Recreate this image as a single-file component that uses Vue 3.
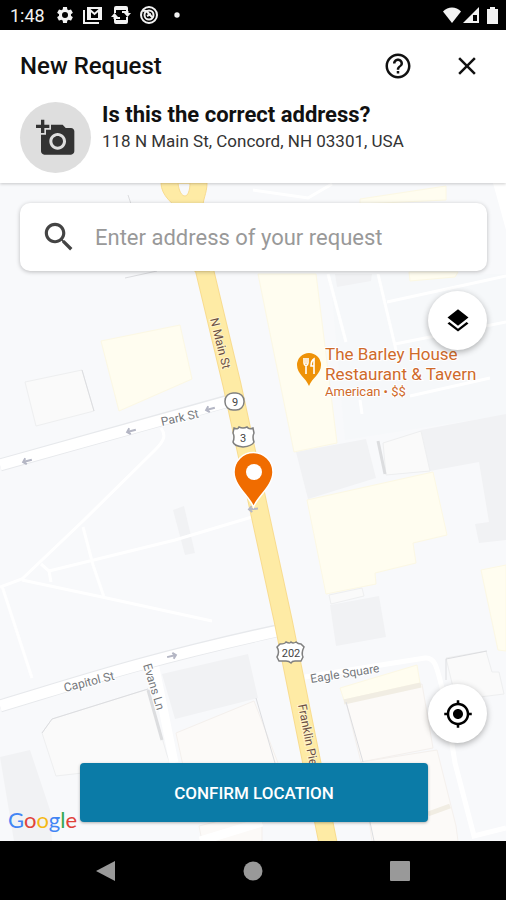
<script setup>
import { ref } from 'vue';

const address = ref('');

// Здания на карте
const yellowBlocks = [
  '101,341 180,325 192,379 119,411',
  '258,274 316,274 337,443 294,452',
  '360,199 446,186 446,200 360,204',
  '409,272 458,272 455,277 410,281',
  '307,500 433,472 447,535 413,543 416,563 375,573 376,584 326,594',
  '481,570 506,565 506,651 498,650',
  '340,688 417,665 420,683 344,700',
];

const grayBlocks = [
  '296,452 366,439 376,478 308,499',
  '421,430 506,414 506,540 479,543 475,524 489,522 479,462 430,471',
  '330,605 379,596 386,637 336,646',
  '335,274 372,274 371,281 337,287',
  '173,510 184,506 195,553 185,555',
  '162,674 248,654 258,698 175,719',
  '0,757 30,750 50,810 52,841 14,841',
];

const whiteBlocks = [
  '25,382 82,370 94,411 36,426',
  '383,443 421,431 430,471 386,475',
  '42,733 52,719 148,689 167,755 170,763 56,776',
  '446,658 486,651 492,672 499,672 504,694 456,700',
  '329,595 362,588 364,596 331,604',
];

const pinkBlocks = [
  '176,733 254,701 278,763 278,784 187,784',
  '346,702 422,684 433,748 361,762',
  '361,762 437,750 456,826 458,841 372,841',
  '199,826 262,810 262,841 202,841',
];

// Пешеходные дорожки и мелкие улицы
const paths = [
  'M161 428C166 435 165 440 155 450L84 520L22 579L0 587',
  'M49 571L175 540L252 517',
  'M22 580L102 597L212 621',
  'M83 527L93 565L104 597',
  'M41 564L49 571L51 582',
  'M2 586L32 678',
  'M328 274L346 342',
  'M378 274L396 350',
  'M387 302L506 276',
  'M395 344L506 322',
  'M360 400L362 414',
  'M410 396L490 378',
  'M253 190L308 198L332 184',
];

const arrows = [
  { x: 27, y: 461, turn: 165 },
  { x: 131, y: 431, turn: 165 },
  { x: 210, y: 409, turn: 165 },
  { x: 172, y: 656, turn: -13 },
  { x: 253, y: 509, turn: 175 },
];

const logo = [
  { letter: 'G', color: 'logo-blue' },
  { letter: 'o', color: 'logo-red' },
  { letter: 'o', color: 'logo-yellow' },
  { letter: 'g', color: 'logo-blue' },
  { letter: 'l', color: 'logo-green' },
  { letter: 'e', color: 'logo-red' },
];
</script>

<template>
  <div class="screen">
    <div class="status-bar">
      <span class="time">1:48</span>
      <svg class="status-icon" viewBox="0 0 24 24">
        <path d="M19.14 12.94c.04-.3.06-.61.06-.94 0-.32-.02-.64-.07-.94l2.03-1.58c.18-.14.23-.41.12-.61l-1.92-3.32c-.12-.22-.37-.29-.59-.22l-2.39.96c-.5-.38-1.03-.7-1.62-.94l-.36-2.54c-.04-.24-.24-.41-.48-.41h-3.84c-.24 0-.43.17-.47.41l-.36 2.54c-.59.24-1.13.57-1.62.94l-2.39-.96c-.22-.08-.47 0-.59.22L2.74 8.87c-.12.21-.08.47.12.61l2.03 1.58c-.05.3-.09.63-.09.94s.02.64.07.94l-2.03 1.58c-.18.14-.23.41-.12.61l1.92 3.32c.12.22.37.29.59.22l2.39-.96c.5.38 1.03.7 1.62.94l.36 2.54c.05.24.24.41.48.41h3.84c.24 0 .44-.17.47-.41l.36-2.54c.59-.24 1.13-.56 1.62-.94l2.39.96c.22.08.47 0 .59-.22l1.92-3.32c.12-.22.07-.47-.12-.61l-2.01-1.58zM12 15.6A3.6 3.6 0 1 1 12 8.4a3.6 3.6 0 0 1 0 7.2z" />
      </svg>
      <svg class="status-icon" viewBox="0 0 20 20">
        <path d="M1 5v13h15" class="line" />
        <path d="M5 3h13v11H5z" class="line" />
        <path d="M7 13V5l4.500 4L16 5v8" class="line" />
      </svg>
      <svg class="status-icon" viewBox="0 0 20 20">
        <path d="M5 1h10a2 2 0 0 1 2 2v5h-2V5H5v3H3V3a2 2 0 0 1 2-2zM3 12h2v3h10v-3h2v5a2 2 0 0 1-2 2H5a2 2 0 0 1-2-2z" />
        <path d="M0 12l3.500-4 3.500 4zM13 8h7l-3.500 4z" />
        <path d="M3.500 11v2H9M16.500 9V7H11" class="line" />
      </svg>
      <svg class="status-icon" viewBox="0 0 20 20">
        <circle cx="10" cy="10" r="8" class="line" />
        <circle cx="10" cy="10" r="4.500" class="line" />
        <path d="M4 6q4-1 6 3l4 4M8 11l4-2" class="line" />
      </svg>
      <svg class="status-icon" viewBox="0 0 20 20"><circle cx="10" cy="10" r="2.700" /></svg>
      <div class="signals">
        <svg width="18" height="16" viewBox="0 0 18 16"><path d="M9 16L0 4.500C5-1 13-1 18 4.500z" /></svg>
        <svg width="16" height="16" viewBox="0 0 16 16">
          <path fill-rule="evenodd" d="M16 0v16H0zM10 8v6h4V8z" />
        </svg>
        <svg class="battery" width="11" height="17" viewBox="0 0 11 17">
          <path d="M3 0h5v2h3v15H0V2h3z" />
        </svg>
      </div>
    </div>

    <header class="header">
      <div class="title-row">
        <h1>New Request</h1>
        <button class="icon-button" type="button" aria-label="Help">
          <svg width="30" height="30" viewBox="0 0 24 24">
            <path d="M11 18h2v-2h-2v2zm1-16C6.480 2 2 6.480 2 12s4.480 10 10 10 10-4.480 10-10S17.520 2 12 2zm0 18c-4.410 0-8-3.590-8-8s3.590-8 8-8 8 3.590 8 8-3.590 8-8 8zm0-14c-2.210 0-4 1.790-4 4h2c0-1.100.9-2 2-2s2 .9 2 2c0 2-3 1.750-3 5h2c0-2.250 3-2.500 3-5 0-2.210-1.790-4-4-4z" />
          </svg>
        </button>
        <button class="icon-button" type="button" aria-label="Close">
          <svg width="30" height="30" viewBox="0 0 24 24">
            <path d="M19 6.410L17.590 5 12 10.590 6.410 5 5 6.410 10.590 12 5 17.590 6.410 19 12 13.410 17.590 19 19 17.590 13.410 12z" />
          </svg>
        </button>
      </div>
      <div class="address-row">
        <button class="photo" type="button" aria-label="Add photo">
          <svg width="40" height="40" viewBox="0 0 24 24">
            <path d="M3 4V1h2v3h3v2H5v3H3V6H0V4h3zm3 6V7h3V4h7l1.830 2H21c1.100 0 2 .9 2 2v12c0 1.100-.9 2-2 2H5c-1.100 0-2-.9-2-2V10h3zm7 9c2.760 0 5-2.240 5-5s-2.240-5-5-5-5 2.240-5 5 2.240 5 5 5zm-3.200-5c0 1.770 1.430 3.200 3.200 3.200s3.200-1.430 3.200-3.200-1.430-3.200-3.200-3.200-3.200 1.430-3.200 3.200z" />
          </svg>
        </button>
        <div class="address">
          <h2>Is this the correct address?</h2>
          <p>118 N Main St, Concord, NH 03301, USA</p>
        </div>
      </div>
    </header>

    <main class="map">
      <svg class="map-canvas" viewBox="0 183 506 658" preserveAspectRatio="xMidYMid slice">
        <rect x="0" y="183" width="506" height="658" fill="#f8f9fb" />
        <path d="M330 274L506 274V415L440 425L345 440z" fill="#f6f8fa" />
        <polygon v-for="points in grayBlocks" :key="points" :points="points" class="gray" />
        <polygon v-for="points in yellowBlocks" :key="points" :points="points" class="yellow" />
        <polygon v-for="points in whiteBlocks" :key="points" :points="points" class="white" />
        <polygon v-for="points in pinkBlocks" :key="points" :points="points" class="pink" />
        <path d="M344 702L421 685M428 814L450 806" fill="none" stroke="#f1ede3" stroke-width="5" />

        <!-- Тени зданий -->
        <path d="M378 441l7 33" class="shade" />
        <path d="M148 690l14 50" class="shade" />
        <path d="M82 370l12 41M446 680v-21l41-8M42 733l10-14 96-30M346 702l17 60M256 698l19 65M370 822l4 19M125 278l32-7M128 195l4 12" class="thin-shade" />

        <path v-for="d in paths" :key="d" :d="d" class="footpath" />
        <path d="M305 677L425 658C436 657 437 668 445 700L455 763L474 836L506 828" class="footpath wide" />
        <path d="M154 663L174 763M200 841L262 822" class="lane" />
        <path d="M493 183L506 230V183z" fill="#fff" />

        <!-- Улицы -->
        <path d="M0 465L228 401" class="street-edge" />
        <path d="M0 465L230 401" class="street" />
        <path d="M0 706C80 682 145 660 276 631" class="street-edge" />
        <path d="M0 706C80 682 145 660 278 631" class="street" />

        <path d="M204 268L232 385L283 620L328 843" class="highway-edge" />
        <path d="M204 268L232 385L283 620L328 843" class="highway" />
        <path fill-rule="evenodd" d="M161 183H207C207 194 202 200 203 210L210 271H194L184 211C173 206 161 195 161 183zM178 183C179 192 182 196 185 196S190 190 190 183z" class="junction" />

        <g v-for="(arrow, i) in arrows" :key="i" :transform="`translate(${arrow.x} ${arrow.y}) rotate(${arrow.turn})`">
          <path d="M-5 0H3M1-3L4 0 1 3" class="arrow" />
        </g>

        <g class="street-name">
          <text transform="translate(162 426) rotate(-13)">Park St</text>
          <text transform="translate(65 692) rotate(-14)">Capitol St</text>
          <text transform="translate(143 665) rotate(73)">Evans Ln</text>
          <text transform="translate(311 683) rotate(-9)" class="square">Eagle Square</text>
          <text transform="translate(210 319) rotate(76)" class="main">N Main St</text>
          <text transform="translate(298 705) rotate(79)" class="main">Franklin Pierce</text>
        </g>

        <g class="shield">
          <rect x="225" y="393" width="19" height="17" rx="8" />
          <text x="235" y="406">9</text>
          <path d="M234 428q4 2 5-1 4 2 8 0 2 3 6 1l1 5q-2 4 0 9-2 4-11 5-9-1-10-5 2-5 0-9z" />
          <text x="243" y="442">3</text>
          <path d="M280 644q5 0 6-2 4 2 5 0 2 2 5 0 2 2 5 2l3 3q-3 6-1 10l-2 4-6 0q-3 0-4 2-2-2-5-2l-7 0-2-4q3-5 0-10z" />
          <text x="291" y="657">202</text>
        </g>

        <path d="M309 386C306 378 297 374 297 365a12 12 0 0 1 24 0C321 374 312 378 309 386z" fill="#ee9208" />
        <path d="M304 358v5q0 2 2 3v8M306 358v6M308 358v5q0 2-2 3M314 374v-15q-3 2-3 7h3" fill="none" stroke="#fff" stroke-width="1.600" />
        <g class="place">
          <text x="325" y="360">The Barley House</text>
          <text x="325" y="380">Restaurant &amp; Tavern</text>
          <text x="325" y="396" class="kind">American • $$</text>
        </g>

        <path d="M253.500 507C250 497 234 486 234 472a19.500 19.500 0 0 1 39 0C273 486 257 497 253.500 507z" fill="#f06c00" stroke="#fff" stroke-width="1.500" />
        <circle cx="254" cy="472" r="8" fill="#fff" />
      </svg>

      <div class="controls">
        <label class="search">
          <svg width="38" height="38" viewBox="0 0 24 24">
            <path d="M15.500 14h-.79l-.28-.27C15.410 12.590 16 11.110 16 9.500 16 5.910 13.090 3 9.500 3S3 5.910 3 9.500 5.910 16 9.500 16c1.610 0 3.090-.59 4.230-1.570l.27.28v.79l5 4.990L20.490 19l-4.990-5zm-6 0C7.010 14 5 11.990 5 9.500S7.010 5 9.500 5 14 7.010 14 9.500 11.990 14 9.500 14z" />
          </svg>
          <input v-model="address" type="text" placeholder="Enter address of your request" aria-label="Enter address of your request">
        </label>
        <button class="round" type="button" aria-label="Map layers">
          <svg width="28" height="28" viewBox="0 0 24 24">
            <path d="M11.990 18.540l-7.370-5.730L3 14.070l9 7 9-7-1.630-1.270-7.380 5.740zM12 16l7.360-5.730L21 9l-9-7-9 7 1.630 1.270L12 16z" />
          </svg>
        </button>
        <button class="round locate" type="button" aria-label="My location">
          <svg width="30" height="30" viewBox="0 0 24 24">
            <path d="M12 8c-2.210 0-4 1.790-4 4s1.790 4 4 4 4-1.790 4-4-1.790-4-4-4zm8.940 3c-.46-4.170-3.770-7.480-7.940-7.940V1h-2v2.060C6.830 3.520 3.520 6.830 3.060 11H1v2h2.060c.46 4.170 3.770 7.480 7.940 7.940V23h2v-2.060c4.170-.46 7.480-3.770 7.940-7.940H23v-2h-2.060zM12 19c-3.870 0-7-3.130-7-7s3.130-7 7-7 7 3.130 7 7-3.130 7-7 7z" />
          </svg>
        </button>
      </div>
      <div class="bottom-row">
        <div class="logo">
          <span v-for="(item, i) in logo" :key="i" :class="item.color">{{ item.letter }}</span>
        </div>
        <button class="confirm" type="button">CONFIRM LOCATION</button>
      </div>
    </main>

    <nav class="nav-bar">
      <button type="button" aria-label="Back">
        <svg width="20" height="20" viewBox="0 0 20 20"><path d="M19 0v20L0 10z" /></svg>
      </button>
      <button type="button" aria-label="Home">
        <svg width="20" height="20" viewBox="0 0 20 20"><circle cx="10" cy="10" r="9.500" /></svg>
      </button>
      <button type="button" aria-label="Recent apps">
        <svg width="20" height="20" viewBox="0 0 20 20"><rect width="20" height="20" rx="1" /></svg>
      </button>
    </nav>
  </div>
</template>

<style>
body {
  margin: 0;
  background: #000;
}
</style>

<style scoped>
.screen {
  min-height: 100vh;
  display: flex;
  flex-direction: column;
  font-family: Roboto, "Liberation Sans", sans-serif;
  color: #111;
}

button {
  border: none;
  padding: 0;
  background: none;
  font-family: inherit;
  cursor: pointer;
  display: flex;
  align-items: center;
  justify-content: center;
}

/* Строка состояния */
.status-bar {
  height: 30px;
  padding: 0 8px 0 10px;
  display: flex;
  align-items: center;
  gap: 8px;
  background: #000;
  color: #f2f2f2;
  fill: #f2f2f2;
}

.time {
  font-size: 18px;
  margin-right: 2px;
}

.status-icon {
  width: 20px;
  height: 20px;
}

.line {
  fill: none;
  stroke: #f2f2f2;
  stroke-width: 2;
}

.signals {
  margin-left: auto;
  display: flex;
  align-items: center;
  gap: 2px;
}

.battery {
  margin-left: 6px;
}

/* Шапка */
.header {
  padding: 17px 20px 10px;
  background: #fff;
  box-shadow: 0 1px 3px rgba(0, 0, 0, 0.2);
  position: relative;
  z-index: 1;
}

.title-row {
  height: 38px;
  display: flex;
  align-items: center;
  gap: 39px;
  padding-right: 4px;
}

.icon-button {
  fill: #111;
}

h1 {
  flex: 1;
  margin: 0;
  font-size: 24px;
  line-height: 32px;
  font-weight: 500;
}

.address-row {
  display: flex;
  gap: 11px;
  margin-top: 17px;
}

.photo {
  width: 71px;
  height: 71px;
  border-radius: 50%;
  background: #dedede;
  fill: #333;
}

h2 {
  margin: 0;
  font-size: 22px;
  line-height: 26px;
  font-weight: 700;
}

p {
  margin: 0;
  font-size: 17px;
  line-height: 26px;
  color: #333;
}

/* Карта */
.map {
  flex: 1;
  position: relative;
  display: flex;
  flex-direction: column;
  overflow: hidden;
}

.map-canvas {
  position: absolute;
  inset: 0;
  width: 100%;
  height: 100%;
}

.gray {
  fill: #f1f2f4;
}

.yellow {
  fill: #fffdf0;
  stroke: #fcf8e4;
}

.white {
  fill: #fafafa;
  stroke: #eeeff0;
}

.pink {
  fill: #fcfaf8;
  stroke: #f4f0ed;
}

.shade {
  fill: none;
  stroke: #dcdddf;
  stroke-width: 3;
}

.thin-shade {
  fill: none;
  stroke: #dcdde0;
  stroke-width: 1;
}

.footpath {
  fill: none;
  stroke: #fff;
  stroke-width: 3;
}

.footpath.wide {
  stroke-width: 5;
}

.lane {
  fill: none;
  stroke: #fff;
  stroke-width: 9;
}

.street {
  fill: none;
  stroke: #fff;
  stroke-width: 11;
}

.street-edge {
  fill: none;
  stroke: #e7e9ec;
  stroke-width: 13;
}

.highway {
  fill: none;
  stroke: #feeba5;
  stroke-width: 17;
}

.highway-edge {
  fill: none;
  stroke: #f8dc90;
  stroke-width: 19;
}

.junction {
  fill: #feeba5;
  stroke: #f8dc90;
}

.arrow {
  fill: none;
  stroke: #b4b6c4;
  stroke-width: 2;
}

.street-name text {
  font-size: 12px;
  fill: #75787c;
  stroke: #fff;
  stroke-width: 2;
  paint-order: stroke;
}

.street-name .square {
  font-size: 12px;
}

.street-name .main {
  fill: #6b4f43;
  stroke: #fff3c9;
}

.shield {
  fill: #fff;
  stroke: #808080;
  stroke-width: 1.5;
}

.shield text {
  fill: #444;
  stroke: none;
  font-size: 11px;
  text-anchor: middle;
}

.place text {
  font-size: 17px;
  fill: #cf6a2b;
  stroke: #fff;
  stroke-width: 2;
  paint-order: stroke;
}

.place .kind {
  font-size: 13px;
}

.controls {
  flex: 1;
  position: relative;
  display: flex;
  flex-direction: column;
  align-items: flex-end;
  gap: 20px;
  padding: 20px 19px 20px 20px;
}

.search {
  box-sizing: border-box;
  width: 100%;
  height: 68px;
  padding: 0 20px;
  display: flex;
  align-items: center;
  gap: 17px;
  border-radius: 10px;
  background: #fff;
  box-shadow: 0 1px 4px rgba(0, 0, 0, 0.25);
  fill: #444;
}

.search input {
  flex: 1;
  min-width: 0;
  border: none;
  outline: none;
  padding: 0;
  background: none;
  font-family: inherit;
  font-size: 22px;
  color: #222;
}

.search input::placeholder {
  color: #999;
  opacity: 1;
}

.round {
  width: 59px;
  height: 59px;
  border-radius: 50%;
  background: #fff;
  box-shadow: 0 2px 6px rgba(0, 0, 0, 0.3);
}

.locate {
  margin-top: auto;
}

.bottom-row {
  position: relative;
  display: grid;
  grid-template-columns: 80px 1fr 78px;
  align-items: end;
}

.logo {
  padding: 0 0 10px 8px;
  font-family: Lato, sans-serif;
  font-size: 22px;
  line-height: 22px;
}

.logo-blue {
  color: #4285f4;
}

.logo-red {
  color: #e0433a;
}

.logo-yellow {
  color: #f5b916;
}

.logo-green {
  color: #34a853;
}

.confirm {
  height: 59px;
  margin-bottom: 19px;
  border-radius: 4px;
  background: #0b7ba7;
  box-shadow: 0 1px 3px rgba(0, 0, 0, 0.3);
  color: #fff;
  font-size: 17px;
  font-weight: 500;
}

/* Навигация */
.nav-bar {
  height: 59px;
  padding: 0 33px;
  display: flex;
  background: #000;
}

.nav-bar button {
  flex: 1;
  fill: #999;
}
</style>
